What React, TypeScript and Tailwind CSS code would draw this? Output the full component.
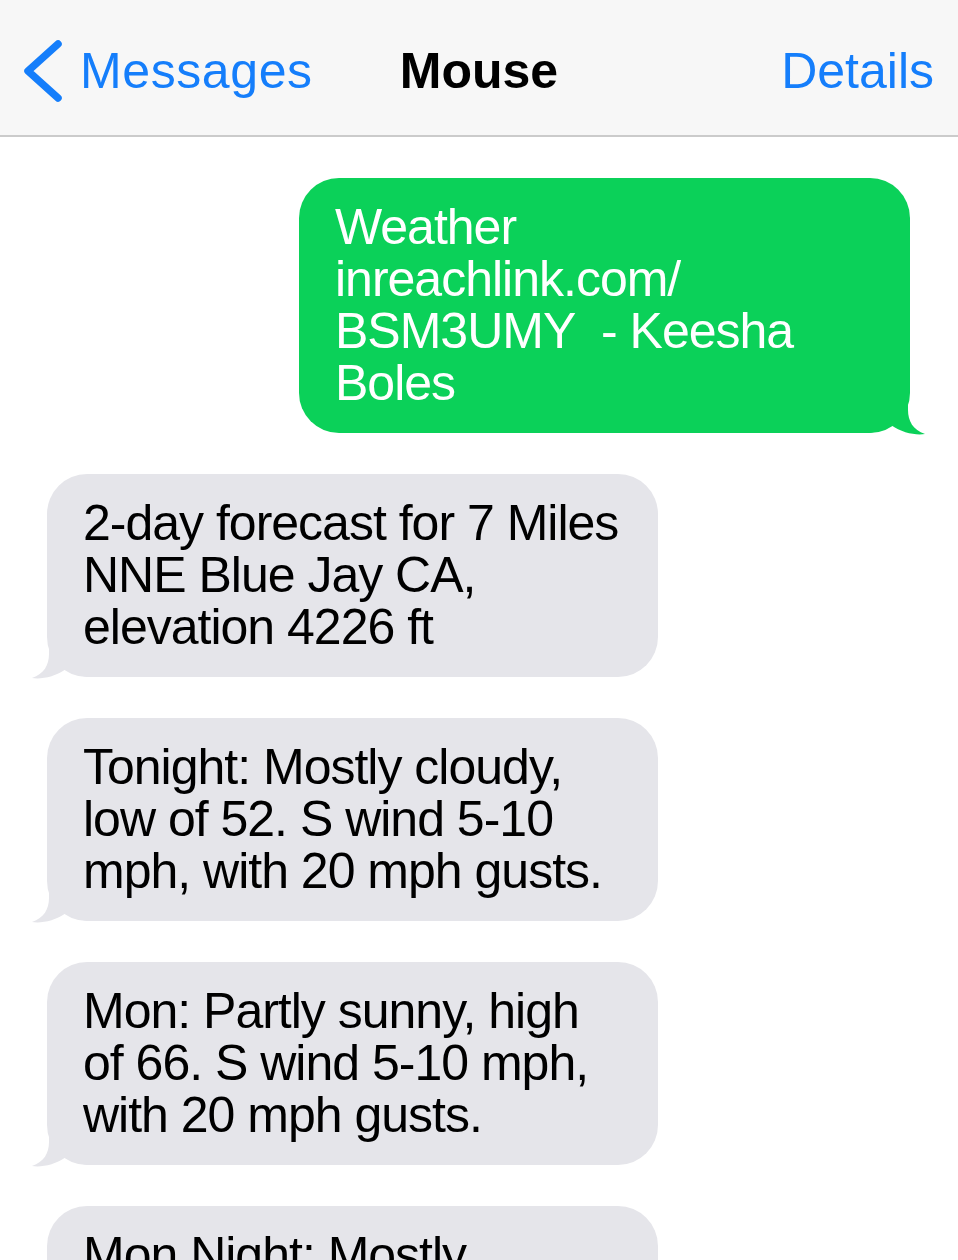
import React from 'react';

type Message = {
  id: string;
  from: 'me' | 'them';
  lines: string[];
};

const MESSAGES: Message[] = [
  {
    id: 'm1',
    from: 'me',
    lines: ['Weather', 'inreachlink.com/', 'BSM3UMY\u00a0 - Keesha', 'Boles'],
  },
  {
    id: 'm2',
    from: 'them',
    lines: ['2-day forecast for 7 Miles', 'NNE Blue Jay CA,', 'elevation 4226 ft'],
  },
  {
    id: 'm3',
    from: 'them',
    lines: ['Tonight: Mostly cloudy,', 'low of 52. S wind 5-10', 'mph, with 20 mph gusts.'],
  },
  {
    id: 'm4',
    from: 'them',
    lines: ['Mon: Partly sunny, high', 'of 66. S wind 5-10 mph,', 'with 20 mph gusts.'],
  },
  {
    id: 'm5',
    from: 'them',
    lines: ['Mon Night: Mostly', 'clear, low of 50. S wind', '5-10 mph.'],
  },
];

const FONT = "font-['Liberation_Sans','Helvetica_Neue',Arial,sans-serif]";

function Tail({ color, flip }: { color: string; flip?: boolean }) {
  return (
    <svg
      width="64"
      height="49"
      viewBox="0 0 64 49"
      className={`absolute bottom-[-4px] ${flip ? 'left-[-17px] -scale-x-100' : 'right-[-17px]'}`}
    >
      <path
        d="M0 0 H45 V22 C45 33 50 42 62 46 C53 47.5 39 45 28 37 C21 42 12 45 0 45 Z"
        fill={color}
      />
    </svg>
  );
}

function Bubble({ msg }: { msg: Message }) {
  const mine = msg.from === 'me';
  return (
    <div className={`flex ${mine ? 'justify-end pr-[48px]' : 'justify-start pl-[47px]'}`}>
      <div
        className={`relative w-[611px] rounded-[40px] pl-[36px] pr-[30px] pt-[23px] pb-[24px] ${
          mine ? 'bg-[#0bd159] text-white' : 'bg-[#e5e5ea] text-black'
        }`}
      >
        <Tail color={mine ? '#0bd159' : '#e5e5ea'} flip={!mine} />
        <p className="relative text-[50px] leading-[52px] tracking-[-1px] whitespace-nowrap">
          {msg.lines.map((l, i) => (
            <span key={i} className="block">
              {l}
            </span>
          ))}
        </p>
      </div>
    </div>
  );
}

export default function App() {
  return (
    <div className={`${FONT} w-[958px] h-[1260px] overflow-hidden bg-white`}>
      <header className="grid grid-cols-[1fr_auto_1fr] items-center h-[137px] pt-[6px] px-[24px] bg-[#f7f7f7] border-b-2 border-[#cbcbcb]">
        <div className="flex items-center text-[#157efb]">
          <svg width="40" height="64" viewBox="0 0 40 64" className="-ml-[1px]">
            <path
              d="M35 5 L5 32 L35 59"
              fill="none"
              stroke="#157efb"
              strokeWidth="7.5"
              strokeLinecap="round"
              strokeLinejoin="round"
            />
          </svg>
          <span className="ml-[17px] text-[50px] leading-[50px] tracking-[0.6px]">Messages</span>
        </div>
        <h1 className="text-[50px] leading-[50px] font-bold text-black">Mouse</h1>
        <div className="text-right text-[50px] leading-[50px] text-[#157efb]">Details</div>
      </header>

      <main className="flex flex-col gap-[41px] pt-[41px]">
        {MESSAGES.map((m) => (
          <Bubble key={m.id} msg={m} />
        ))}
      </main>
    </div>
  );
}
